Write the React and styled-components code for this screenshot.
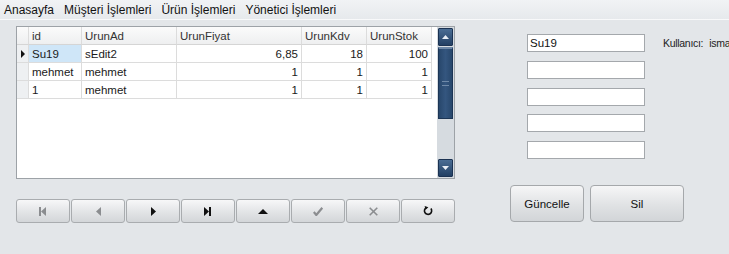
import React from "react";
import styled, { createGlobalStyle } from "styled-components";

const GlobalStyle = createGlobalStyle`
  body {
    margin: 0;
    background: #e3e6e9;
    font-family: "Liberation Sans", Arial, sans-serif;
    font-size: 11.5px;
    color: #1a1a1a;
  }
`;

const columns = [
  { title: "id", width: 53 },
  { title: "UrunAd", width: 95 },
  { title: "UrunFiyat", width: 125, right: true },
  { title: "UrunKdv", width: 65, right: true },
  { title: "UrunStok", width: 65, right: true },
];

const rows = [
  ["Su19", "sEdit2", "6,85", "18", "100"],
  ["mehmet", "mehmet", "1", "1", "1"],
  ["1", "mehmet", "1", "1", "1"],
];

const menus = ["Anasayfa", "Müşteri İşlemleri", "Ürün İşlemleri", "Yönetici İşlemleri"];

const App = () => {
  return (
    <Page>
      <GlobalStyle />
      <MenuBar>
        {menus.map((m) => (
          <MenuItem key={m}>{m}</MenuItem>
        ))}
      </MenuBar>
      <Content>
        <LeftSide>
          <GridBox>
            <Table>
              <HeadCell />
              {columns.map((c) => (
                <HeadCell key={c.title}>{c.title}</HeadCell>
              ))}
              {rows.map((r, i) => (
                <React.Fragment key={i}>
                  <Indicator>{i === 0 && <Arrow />}</Indicator>
                  {r.map((v, j) => (
                    <Cell key={j} $right={columns[j].right} $selected={i === 0 && j === 0}>
                      {v}
                    </Cell>
                  ))}
                </React.Fragment>
              ))}
            </Table>
            <ScrollBar>
              <ScrollButton>
                <svg width="7" height="4" viewBox="0 0 7 4">
                  <path d="M0 4 L3.5 0 L7 4 Z" fill="#e8eef5" />
                </svg>
              </ScrollButton>
              <Thumb>
                <Grip />
              </Thumb>
              <Track />
              <ScrollButton>
                <svg width="7" height="4" viewBox="0 0 7 4">
                  <path d="M0 0 L3.5 4 L7 0 Z" fill="#e8eef5" />
                </svg>
              </ScrollButton>
            </ScrollBar>
          </GridBox>
          <Navigator>
            <NavButton>
              <svg width="8" height="9" viewBox="0 0 8 9">
                <rect x="0" y="0" width="2" height="9" fill="#8b8d90" />
                <path d="M7 0 L2 4.5 L7 9 Z" fill="#8b8d90" />
              </svg>
            </NavButton>
            <NavButton>
              <svg width="5" height="9" viewBox="0 0 5 9">
                <path d="M5 0 L0 4.5 L5 9 Z" fill="#8b8d90" />
              </svg>
            </NavButton>
            <NavButton>
              <svg width="5" height="9" viewBox="0 0 5 9">
                <path d="M0 0 L5 4.5 L0 9 Z" fill="#111" />
              </svg>
            </NavButton>
            <NavButton>
              <svg width="8" height="9" viewBox="0 0 8 9">
                <path d="M0 0 L5 4.5 L0 9 Z" fill="#111" />
                <rect x="5" y="0" width="2" height="9" fill="#111" />
              </svg>
            </NavButton>
            <NavButton>
              <svg width="10" height="5" viewBox="0 0 10 5">
                <path d="M0 5 L5 0 L10 5 Z" fill="#111" />
              </svg>
            </NavButton>
            <NavButton>
              <svg width="10" height="9" viewBox="0 0 10 9">
                <path d="M0.8 5 L3.3 8 L9.3 0.8" fill="none" stroke="#8b8d90" strokeWidth="2.2" />
              </svg>
            </NavButton>
            <NavButton>
              <svg width="9" height="9" viewBox="0 0 9 9">
                <path d="M0.7 0.7 L8.3 8.3 M8.3 0.7 L0.7 8.3" stroke="#8b8d90" strokeWidth="1.6" />
              </svg>
            </NavButton>
            <NavButton>
              <svg width="10" height="10" viewBox="0 0 10 10">
                <path d="M7.9 2.6 A3.6 3.6 0 1 1 3.2 1.7" fill="none" stroke="#111" strokeWidth="1.6" />
                <path d="M1.6 0 L5.4 1.2 L2.6 3.8 Z" fill="#111" />
              </svg>
            </NavButton>
          </Navigator>
        </LeftSide>
        <RightSide>
          <FormRow>
            <Inputs>
              <Input defaultValue="Su19" />
              <Input />
              <Input />
              <Input />
              <Input />
            </Inputs>
            <UserLabel>
              Kullanıcı:<UserName>isma</UserName>
            </UserLabel>
          </FormRow>
          <Actions>
            <ActionButton $w={74}>Güncelle</ActionButton>
            <ActionButton $w={94}>Sil</ActionButton>
          </Actions>
        </RightSide>
      </Content>
    </Page>
  );
};

export default App;

const Page = styled.div`
  width: 729px;
  height: 254px;
  overflow: hidden;
  background: #e3e6e9;
`;

const MenuBar = styled.div`
  height: 19px;
  display: flex;
  align-items: center;
  gap: 10px;
  padding-left: 4px;
  background: linear-gradient(#f1f3f5, #e6e9ec);
  border-bottom: 1px solid #f8f9fa;
  font-size: 12px;
`;

const MenuItem = styled.span`
  color: #111;
  cursor: default;
`;

const Content = styled.div`
  display: flex;
  padding-top: 6px;
`;

const LeftSide = styled.div`
  margin-left: 16px;
  display: flex;
  flex-direction: column;
  gap: 20px;
`;

const GridBox = styled.div`
  width: 437px;
  height: 151px;
  border: 1px solid #9da2a7;
  background: #fff;
  display: flex;
  justify-content: space-between;
`;

const Table = styled.div`
  display: grid;
  grid-template-columns: 12px 53px 95px 125px 65px 65px;
  grid-auto-rows: 18px;
  align-content: start;
`;

const HeadCell = styled.div`
  background: linear-gradient(#fbfbfb, #eeeff0);
  border-right: 1px solid #dcdcdc;
  border-bottom: 1px solid #d5d5d5;
  padding-left: 3px;
  display: flex;
  align-items: center;
  color: #333;
  white-space: nowrap;
`;

const Indicator = styled.div`
  background: #eef0f2;
  border-right: 1px solid #dcdcdc;
  border-bottom: 1px solid #dcdcdc;
  display: flex;
  align-items: center;
  justify-content: center;
`;

const Arrow = styled.div`
  width: 0;
  height: 0;
  border-top: 4px solid transparent;
  border-bottom: 4px solid transparent;
  border-left: 4px solid #111;
`;

const Cell = styled.div`
  border-right: 1px solid #dcdcdc;
  border-bottom: 1px solid #dcdcdc;
  padding: 0 3px;
  display: flex;
  align-items: center;
  justify-content: ${(p) => (p.$right ? "flex-end" : "flex-start")};
  background: ${(p) => (p.$selected ? "#cfe6f8" : "#fff")};
  color: #1a1a1a;
  white-space: nowrap;
  overflow: hidden;
`;

const ScrollBar = styled.div`
  width: 17px;
  display: flex;
  flex-direction: column;
  background: #d6dbe0;
`;

const ScrollButton = styled.div`
  height: 16px;
  margin: 1px;
  border-radius: 1px;
  background: linear-gradient(#4a6d94, #223f63);
  border: 1px solid #1b3252;
  display: flex;
  align-items: center;
  justify-content: center;
`;

const Thumb = styled.div`
  height: 69px;
  margin: 0 1px;
  background: linear-gradient(90deg, #28476c, #34567f 50%, #28476c);
  border: 1px solid #1c3555;
  border-top: 2px solid #6d87a6;
  display: flex;
  align-items: center;
  justify-content: center;
`;

const Grip = styled.div`
  width: 7px;
  height: 3px;
  border-top: 1px solid #6f89a8;
  border-bottom: 1px solid #6f89a8;
`;

const Track = styled.div`
  flex: 1;
`;

const Navigator = styled.div`
  display: grid;
  grid-template-columns: repeat(8, 1fr);
  gap: 1px;
  width: 439px;
  height: 24px;
`;

const NavButton = styled.div`
  border: 1px solid #a9acaf;
  border-radius: 3px;
  background: linear-gradient(#f7f7f8, #e2e4e6 55%, #d3d6d9);
  display: flex;
  align-items: center;
  justify-content: center;
`;

const RightSide = styled.div`
  margin-left: 55px;
  display: flex;
  flex-direction: column;
`;

const FormRow = styled.div`
  display: flex;
  align-items: flex-start;
  margin-top: 8px;
  margin-left: 17px;
  gap: 18px;
`;

const Inputs = styled.div`
  display: flex;
  flex-direction: column;
  gap: 8.75px;
`;

const Input = styled.input`
  box-sizing: border-box;
  width: 118px;
  height: 18px;
  border: 1px solid #a4a8ac;
  background: #fff;
  padding: 0 2px;
  font-family: "Liberation Sans", Arial, sans-serif;
  font-size: 11.5px;
  color: #111;
  outline: none;
`;

const UserLabel = styled.span`
  margin-top: 3px;
  white-space: nowrap;
  color: #222;
  font-size: 10.5px;
  letter-spacing: -0.3px;
`;

const UserName = styled.span`
  margin-left: 6px;
`;

const Actions = styled.div`
  display: flex;
  gap: 6px;
  margin-top: 26px;
`;

const ActionButton = styled.div`
  width: ${(p) => p.$w}px;
  height: 37px;
  box-sizing: border-box;
  border: 1px solid #a5a8ab;
  border-radius: 4px;
  background: linear-gradient(#f6f6f7, #e0e2e4 55%, #d2d5d8);
  display: flex;
  align-items: center;
  justify-content: center;
  color: #111;
`;
